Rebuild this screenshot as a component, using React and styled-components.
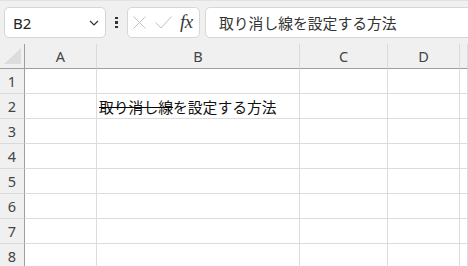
import styled, { createGlobalStyle } from 'styled-components';

const GlobalStyle = createGlobalStyle`
  html, body {
    margin: 0;
    padding: 0;
    background: #fff;
    overflow: hidden;
  }
  * {
    box-sizing: border-box;
  }
`;

const Page = styled.div`
  width: 468px;
  height: 266px;
  overflow: hidden;
  font-family: "Noto Sans", "Noto Sans CJK JP", sans-serif;
`;

const Toolbar = styled.div`
  height: 44px;
  display: flex;
  align-items: flex-start;
  padding: 6px 0 0 4px;
  background: #f0f0f0;
  border-top: 1px solid #e2e2e2;
  overflow: hidden;
`;

const Box = styled.div`
  height: 31px;
  background: #fff;
  border: 1px solid #d6d6d6;
  border-radius: 5px;
  display: flex;
  align-items: center;
  flex: none;
`;

const NameBox = styled(Box)`
  width: 102px;
  padding: 0 6px 0 8px;
  justify-content: space-between;
  font-size: 15px;
  color: #222;
`;

const Dots = styled.div`
  width: 21px;
  height: 31px;
  display: flex;
  flex-direction: column;
  align-items: center;
  justify-content: center;
  gap: 2px;
  flex: none;

  span {
    width: 2.5px;
    height: 2.5px;
    background: #333;
  }
`;

const FxBox = styled(Box)`
  width: 73px;
  padding: 0 0 0 5px;
  gap: 0;
`;

const Icon = styled.svg`
  flex: none;
  margin-right: ${(p) => p.$gap || 0}px;
`;

const FxLabel = styled.span`
  font-family: "Liberation Serif", "DejaVu Serif", serif;
  font-style: italic;
  font-size: 19px;
  line-height: 1;
  color: #3a3a3a;
  letter-spacing: -0.5px;
  margin-top: -2px;
`;

const FormulaBox = styled(Box)`
  width: 290px;
  margin-left: 5px;
  padding-left: 13px;
  font-family: "Noto Sans CJK JP", sans-serif;
  font-size: 14.8px;
  color: #333;
`;

const Grid = styled.div`
  display: grid;
  grid-template-columns: 25px 72px 203px 88px 72px 1fr;
  grid-auto-rows: 25px;
`;

const ColHead = styled.div`
  height: 25px;
  background: #f0f0f0;
  border-bottom: 1px solid #9e9e9e;
  border-right: 1px solid ${(p) => (p.$corner ? '#9e9e9e' : '#dadada')};
  display: flex;
  align-items: center;
  justify-content: center;
  font-size: 14.5px;
  color: #444;
  position: relative;
`;

const RowHead = styled.div`
  background: #f0f0f0;
  border-right: 1px solid #9e9e9e;
  border-bottom: 1px solid #dadada;
  display: flex;
  align-items: center;
  justify-content: center;
  font-size: 14.5px;
  color: #444;
`;

const Cell = styled.div`
  border-right: 1px solid #dcdcdc;
  border-bottom: 1px solid #dcdcdc;
  display: flex;
  align-items: center;
  padding-left: 2px;
  white-space: nowrap;
  overflow: visible;
  font-family: "Noto Sans CJK JP", sans-serif;
  font-size: 14.8px;
  color: #111;
`;

const Strike = styled.span`
  text-decoration: line-through;
  text-decoration-thickness: 1px;
  text-decoration-color: #000;
`;

const Corner = styled.svg`
  position: absolute;
  left: 4px;
  top: 4px;
`;

const cols = ['A', 'B', 'C', 'D', ''];
const rows = [1, 2, 3, 4, 5, 6, 7, 8];

export default function App() {
  return (
    <Page>
      <GlobalStyle />
      <Toolbar>
        <NameBox>
          <span>B2</span>
          <svg width="10" height="6" viewBox="0 0 10 6">
            <path d="M1 1 L5 5 L9 1" fill="none" stroke="#333" strokeWidth="1.2" />
          </svg>
        </NameBox>
        <Dots>
          <span />
          <span />
          <span />
        </Dots>
        <FxBox>
          <Icon width="13" height="13" viewBox="0 0 13 13" $gap={9}>
            <path d="M0.5 0.5 L12.5 12.5 M12.5 0.5 L0.5 12.5" stroke="#c2c2c2" strokeWidth="1" />
          </Icon>
          <Icon width="17" height="13" viewBox="0 0 17 13" $gap={8}>
            <path d="M0.5 6.5 L6 12 L16.5 0.5" fill="none" stroke="#c2c2c2" strokeWidth="1" />
          </Icon>
          <FxLabel>fx</FxLabel>
        </FxBox>
        <FormulaBox>取り消し線を設定する方法</FormulaBox>
      </Toolbar>
      <Grid>
        <ColHead $corner>
          <Corner width="17" height="16" viewBox="0 0 17 16">
            <path d="M0 16 L17 0 L17 16 Z" fill="#dcdcdc" />
          </Corner>
        </ColHead>
        {cols.map((c, i) => (
          <ColHead key={i}>{c}</ColHead>
        ))}
        {rows.map((r) => [
          <RowHead key={`h${r}`}>{r}</RowHead>,
          ...cols.map((c, i) => (
            <Cell key={`${r}-${i}`}>
              {r === 2 && c === 'B' ? (
                <>
                  <Strike>取り消し線</Strike>を設定する方法
                </>
              ) : null}
            </Cell>
          )),
        ])}
      </Grid>
    </Page>
  );
}
